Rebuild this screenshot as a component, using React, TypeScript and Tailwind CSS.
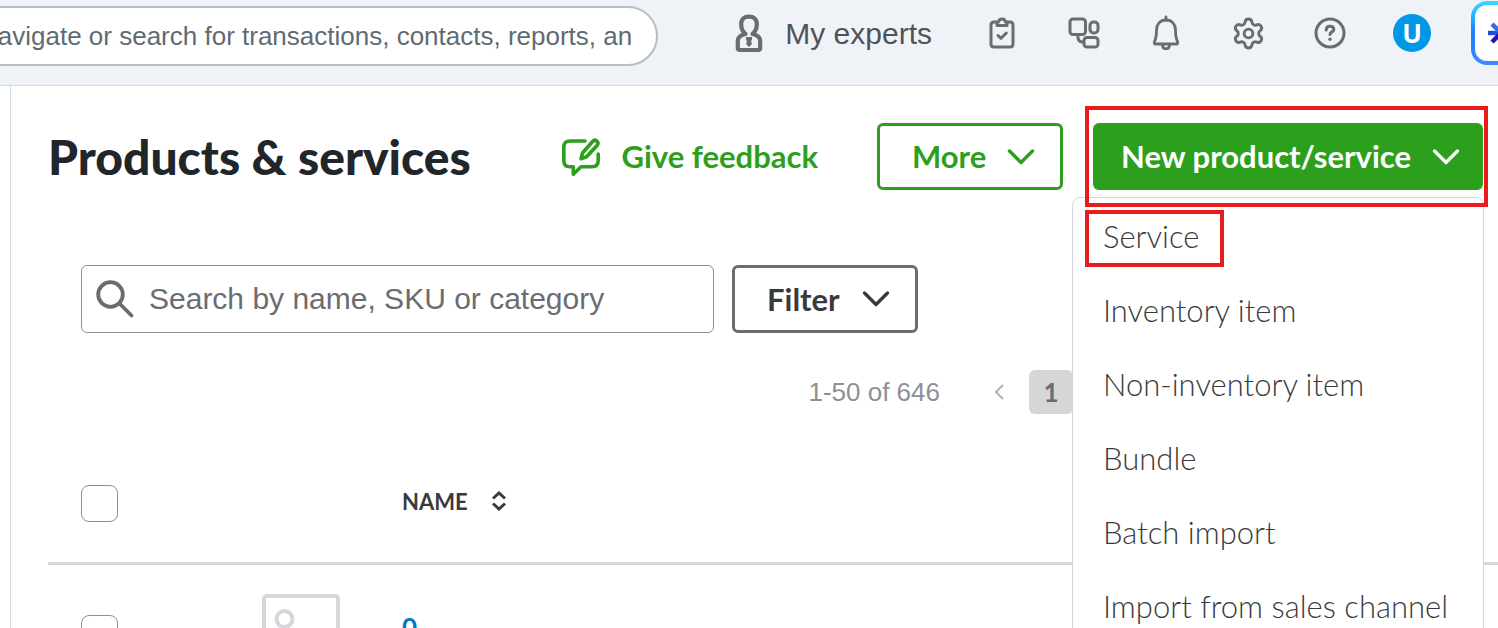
import React, { useState } from "react";
import { Settings } from "lucide-react";

const menuItems = [
  "Service",
  "Inventory item",
  "Non-inventory item",
  "Bundle",
  "Batch import",
  "Import from sales channel",
];

const ChevronDown = () => (
  <svg
    width="28"
    height="18"
    viewBox="0 0 28 18"
    fill="none"
    stroke="currentColor"
    strokeWidth="3.4"
    strokeLinecap="round"
    strokeLinejoin="round"
  >
    <path d="M2.5 3 L14 14.5 L25.5 3" />
  </svg>
);

const ExpertIcon = () => (
  <svg
    width="28"
    height="40"
    viewBox="0 0 28 40"
    fill="none"
    stroke="#6b6c72"
    strokeWidth="4.2"
    strokeLinejoin="round"
  >
    <path d="M10.5 21 C8 19 6.2 15 6.2 11 C6.2 6 9 3.6 14 3.6 C19 3.6 21.8 6 21.8 11 C21.8 15 20 19 17.5 21 C22 22 25.2 24 25.2 28 V35 Q25.2 37 23.2 37 H4.8 Q2.8 37 2.8 35 V28 C2.8 24 6 22 10.5 21 Z" />
    <path
      d="M11 24 H17 V27 L16 28 L17 31 L14 34 L11 31 L12 28 L11 27 Z"
      fill="#6b6c72"
      stroke="none"
    />
  </svg>
);

const TasksIcon = () => (
  <svg
    width="34"
    height="34"
    viewBox="0 0 34 34"
    fill="none"
    stroke="currentColor"
    strokeWidth="3"
    strokeLinecap="round"
    strokeLinejoin="round"
  >
    <path d="M11.5 6 H9 Q6 6 6 9 V28 Q6 31 9 31 H25 Q28 31 28 28 V9 Q28 6 25 6 H22.5" />
    <path d="M12 9.5 V6 H13.5 Q14 3 17 3 Q20 3 20.5 6 H22 V9.5 Z" />
    <path d="M13 19.5 L16 22.3 L21.3 17" />
  </svg>
);

const AppsIcon = () => (
  <svg
    width="34"
    height="34"
    viewBox="0 0 34 34"
    fill="none"
    stroke="currentColor"
    strokeWidth="3"
    strokeLinecap="round"
  >
    <rect x="3" y="3" width="15.5" height="15.5" rx="3" />
    <rect x="23" y="6" width="8" height="11" rx="3.5" />
    <rect x="17" y="21.5" width="14" height="9.5" rx="3" />
    <path d="M11 19 V21.5 Q11 26 16 26" />
  </svg>
);

const BellIcon = () => (
  <svg
    width="34"
    height="36"
    viewBox="0 0 34 36"
    fill="none"
    stroke="currentColor"
    strokeWidth="2.8"
    strokeLinecap="round"
    strokeLinejoin="round"
  >
    <path d="M17 2 V5" />
    <path d="M17 5 C11 5 7.5 9.5 7.5 15 C7.5 21 7 23.5 5.5 26.5 Q4.8 29 6.5 29 H27.5 Q29.2 29 28.5 26.5 C27 23.5 26.5 21 26.5 15 C26.5 9.5 23 5 17 5 Z" />
    <path d="M13.5 30 C13.5 32.5 15 33.8 17 33.8 C19 33.8 20.5 32.5 20.5 30" />
  </svg>
);

const GearIcon = () => <Settings size={35} strokeWidth={2} />;

const HelpIcon = () => (
  <svg
    width="34"
    height="34"
    viewBox="0 0 34 34"
    fill="none"
    stroke="currentColor"
    strokeWidth="3"
    strokeLinecap="round"
    strokeLinejoin="round"
  >
    <circle cx="17" cy="17" r="14" />
    <path d="M13.2 14 C13.2 11.5 14.7 10.3 17 10.3 C19.3 10.3 20.8 11.6 20.8 13.5 C20.8 16 17 15.8 17 18.5" />
    <circle cx="17" cy="23.3" r="1.7" fill="currentColor" stroke="none" />
  </svg>
);

const FeedbackIcon = () => (
  <svg
    width="40"
    height="40"
    viewBox="0 0 40 40"
    fill="none"
    stroke="currentColor"
    strokeWidth="3.6"
    strokeLinecap="round"
    strokeLinejoin="round"
  >
    <path d="M24 4 H9 Q2.8 4 2.8 10 V23.5 Q2.8 29.8 9 29.8 H12.3 V37.2 L20 29.8 H31 Q37.2 29.8 37.2 23.5 V17" />
    <path d="M20 21.7 L21.5 16 L31.8 4.3 Q33.7 2.3 35.8 4.2 Q37.9 6.1 36.2 8.2 L25.6 19.7 Z" />
  </svg>
);

const SearchIcon = () => (
  <svg
    width="40"
    height="40"
    viewBox="0 0 40 40"
    fill="none"
    stroke="#6b6c72"
    strokeWidth="3.8"
    strokeLinecap="round"
  >
    <circle cx="15.5" cy="15.5" r="12.3" />
    <path d="M24.5 24.5 L36.5 36.5" />
  </svg>
);

const PictureIcon = () => (
  <svg
    width="78"
    height="66"
    viewBox="0 0 78 66"
    fill="none"
    stroke="#d4d7dc"
    strokeWidth="4"
    strokeLinejoin="round"
  >
    <rect x="2" y="2" width="74" height="62" rx="3" />
    <circle cx="22.5" cy="25" r="8" />
    <path d="M4 62 L24 46 L34 54 L54 38 L74 54" />
  </svg>
);

const headerActions = [
  { label: "Tasks", Icon: TasksIcon },
  { label: "Apps", Icon: AppsIcon },
  { label: "Notifications", Icon: BellIcon },
  { label: "Settings", Icon: GearIcon },
  { label: "Help", Icon: HelpIcon },
];

const Header = () => (
  <header className="flex h-[86px] shrink-0 items-start border-b border-[#d0dce0] bg-[#eff3f7] font-['Liberation_Sans',sans-serif]">
    <input
      type="text"
      aria-label="Global search"
      placeholder="Navigate or search for transactions, contacts, reports, an"
      className="mt-[6px] -ml-6 h-[60px] min-w-0 flex-1 rounded-r-full border-2 border-[#b5bfc3] bg-white pr-5 pl-px text-[26px] text-[#6b6c72] placeholder:text-[#5f6b72] focus:outline-none"
    />
    <div className="-mr-[37px] flex h-[66px] shrink-0 items-center pl-[77px] text-[#6b6c72]">
      <button className="flex items-center gap-[22px] text-[30px] text-[#4f5359]">
        <ExpertIcon />
        My experts
      </button>
      <div className="ml-[29px] flex">
        {headerActions.map(({ label, Icon }) => (
          <button
            key={label}
            aria-label={label}
            className="flex w-[82px] items-center justify-center"
          >
            <Icon />
          </button>
        ))}
        <button className="flex w-[82px] items-center justify-center">
          <span className="flex size-[38px] items-center justify-center rounded-full bg-[#0097e6] font-['Open_Sans',sans-serif] text-[26px] leading-none font-bold text-white">
            U
          </span>
        </button>
      </div>
      <button
        aria-label="Assistant"
        className="ml-[18px] size-16 rounded-2xl bg-linear-to-b from-[#39dcff] via-[#2478ff] to-[#3d8bff] p-1"
      >
        <span className="flex size-full items-center rounded-xl bg-white pl-3">
          <svg width="32" height="26" viewBox="0 0 32 26">
            <g strokeWidth="4.5" fill="none">
              <path d="M1 13 H12" stroke="#1f4fe8" />
              <path d="M5 4 L12 11" stroke="#2b6df5" />
              <path d="M5 22 L12 15" stroke="#1b16b8" />
              <path
                d="M16 1 V25 M20 13 H31 M19 10 L26 3 M19 16 L26 23"
                stroke="#2440d8"
              />
            </g>
          </svg>
        </span>
      </button>
    </div>
  </header>
);

const NewItemMenu = () => (
  <ul className="absolute top-[74px] -right-px z-10 w-[412px] rounded-t-lg border border-[#d4d7dc] bg-white pt-px">
    {menuItems.map((item) => (
      <li key={item}>
        <button className="flex h-[74px] w-full items-center px-[30px] text-[31px] font-light whitespace-nowrap text-[#393a3d]">
          {item}
        </button>
      </li>
    ))}
  </ul>
);

const ProductsTable = () => (
  <table className="w-full table-fixed text-left">
    <thead>
      <tr className="h-[118px] border-b-[3px] border-[#d4d7dc]">
        <th className="w-[214px] pl-[33px]">
          <input
            type="checkbox"
            aria-label="Select all"
            className="block size-[37px] appearance-none rounded-lg border border-[#8d9096] bg-white"
          />
        </th>
        <th className="w-[140px]" aria-label="Image"></th>
        <th className="pb-1">
          <button className="flex items-center gap-6 text-[22px] font-bold text-[#393a3d]">
            NAME
            <svg
              width="14"
              height="20"
              viewBox="0 0 14 20"
              fill="none"
              stroke="currentColor"
              strokeWidth="3"
            >
              <path d="M1 7.5 L7 2 L13 7.5 M1 12.5 L7 18 L13 12.5" />
            </svg>
          </button>
        </th>
      </tr>
    </thead>
    <tbody>
      <tr className="align-top">
        <td className="pt-[50px] pl-[33px]">
          <input
            type="checkbox"
            aria-label="Select 0"
            className="block size-[37px] appearance-none rounded-lg border border-[#8d9096] bg-white"
          />
        </td>
        <td className="pt-[29px]">
          <PictureIcon />
        </td>
        <td className="pt-[46px]">
          <a href="#" className="text-[26px] leading-8 font-bold text-[#0077c5]">
            0
          </a>
        </td>
      </tr>
    </tbody>
  </table>
);

const App = () => {
  const [isMenuOpen, setIsMenuOpen] = useState(true);

  return (
    <div className="flex h-screen flex-col overflow-hidden bg-white font-[Lato,sans-serif]">
      <Header />
      <main className="ml-[10px] flex-1 border-l border-[#d0dce0] pl-[37px]">
        <div className="flex items-center pt-[37px] pr-[15px]">
          <h1 className="flex-1 text-[48px] leading-none font-black whitespace-nowrap text-[#21262a]">
            Products &amp; services
          </h1>
          <button className="flex items-center gap-5 text-[31px] font-bold text-[#2ca01c]">
            <FeedbackIcon />
            Give feedback
          </button>
          <button className="ml-[59px] flex h-[67px] w-[186px] items-center justify-between rounded-md border-[3px] border-[#2ca01c] pr-[25px] pl-8 text-[31px] font-bold text-[#2ca01c]">
            More
            <ChevronDown />
          </button>
          <div className="relative ml-[30px]">
            <button
              onClick={() => setIsMenuOpen((prev) => !prev)}
              className="flex h-[67px] w-[390px] items-center justify-between rounded-md bg-[#2ca01c] pr-[23px] pl-7 text-[31px] font-bold text-white"
            >
              New product/service
              <ChevronDown />
            </button>
            {isMenuOpen && <NewItemMenu />}
            <div className="pointer-events-none absolute -top-[17px] -left-2 z-20 h-[101px] w-[403px] border-4 border-[#e81c1c]"></div>
            <div className="pointer-events-none absolute top-[87px] -left-2 z-20 h-[57px] w-[139px] border-4 border-[#e81c1c]"></div>
          </div>
        </div>

        <div className="flex gap-[18px] pt-[75px] pl-[33px]">
          <label className="flex h-[68px] w-[633px] items-center gap-[14px] rounded-md border border-[#8d9096] px-[13px]">
            <SearchIcon />
            <input
              type="text"
              aria-label="Search products"
              placeholder="Search by name, SKU or category"
              className="min-w-0 flex-1 font-['Liberation_Sans',sans-serif] text-[30px] leading-8 placeholder:text-[#6b6c72] focus:outline-none"
            />
          </label>
          <button className="flex h-[68px] w-[186px] items-center justify-between rounded-md border-[3px] border-[#6b6c72] pr-[25px] pl-8 text-[31px] font-bold text-[#393a3d]">
            Filter
            <ChevronDown />
          </button>
        </div>

        <div className="flex items-center justify-end pt-[37px] pr-[425px] font-['Liberation_Sans',sans-serif] text-[26px] text-[#8d9096]">
          <span>1-50 of 646</span>
          <button aria-label="Previous page" className="mr-[24px] ml-[53px]">
            <svg
              width="12"
              height="18"
              viewBox="0 0 12 18"
              fill="none"
              stroke="#b0b3b6"
              strokeWidth="2"
            >
              <path d="M10 2 L3 9 L10 16" />
            </svg>
          </button>
          <button className="size-11 rounded-md bg-[#d5d7d6] font-[Lato,sans-serif] font-bold text-[#6b6c72]">
            1
          </button>
        </div>

        <div className="pt-[31px]">
          <ProductsTable />
        </div>
      </main>
    </div>
  );
};

export default App;
